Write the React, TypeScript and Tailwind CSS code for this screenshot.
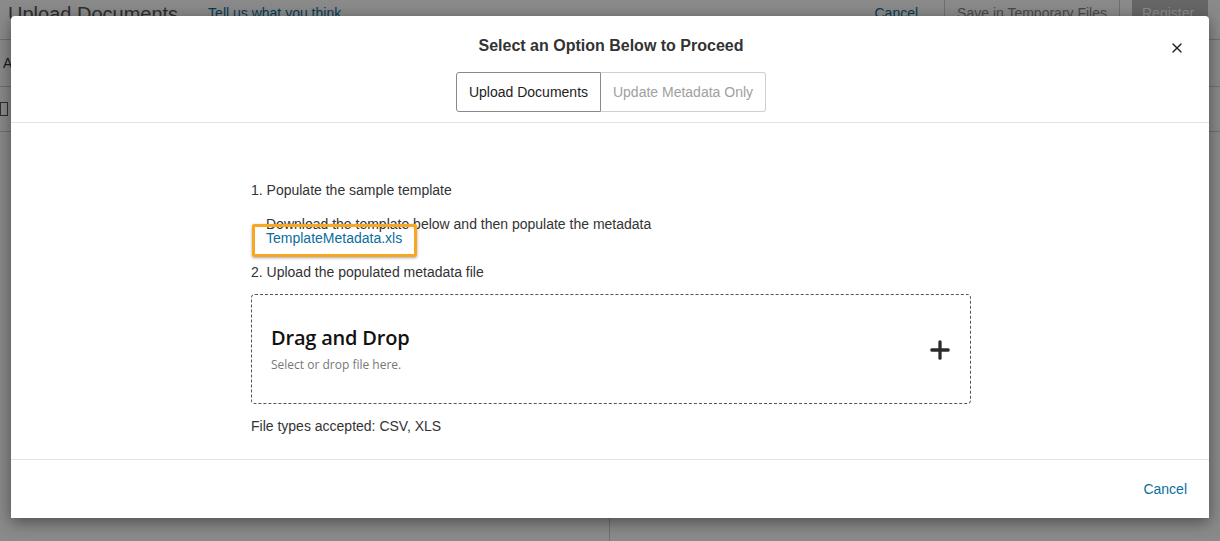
import { X, Plus } from 'lucide-react';

function BackgroundPage() {
  return (
    <div className="h-[541px] w-full overflow-hidden bg-white font-['Liberation_Sans',Arial,sans-serif] text-[#333]">
      <header className="flex h-[40px] items-center border-b border-[#d0d0d0] pl-[8px]">
        <h1 className="-mt-[12px] text-[20px] text-[#555]">Upload Documents</h1>
        <a className="-mt-[12px] ml-[30px] text-[14px] text-[#0a6e9e]">Tell us what you think</a>
        <div className="ml-auto flex h-full items-center">
          <span className="-mt-[12px] mr-[26px] text-[14px] text-[#0a6e9e]">Cancel</span>
          <span className="-mt-[12px] flex h-full items-center border-x border-[#d0d0d0] px-[12px] text-[14px] text-[#888]">
            Save in Temporary Files
          </span>
          <span className="mr-[12px] ml-[12px] flex h-full w-[76px] items-center bg-[#bdbdbd] px-[10px] text-[14px] text-white">
            <span className="-mt-[12px]">Register</span>
          </span>
        </div>
      </header>
      <div className="flex h-[47px] items-center border-b border-[#d0d0d0] pl-[3px] text-[14px]">A</div>
      <div className="flex h-[45px] items-center border-b border-[#d0d0d0] pl-[0px]">
        <span className="h-[14px] w-[8px] border border-[#555]" />
      </div>
      <div className="flex h-full">
        <div className="w-[610px] border-r border-[#d0d0d0]" />
      </div>
    </div>
  );
}

function Modal() {
  return (
    <div className="flex h-[502px] w-[1198px] flex-col rounded-t-[4px] bg-white font-['Liberation_Sans',Arial,sans-serif] text-[14px] text-[#333] shadow-[0_4px_16px_rgba(0,0,0,0.45)]">
      <div className="relative flex flex-col items-center border-b border-[#e3e3e3] pt-[20px] pb-[10px]">
        <h2 className="ml-[2px] text-[16px] leading-[20px] font-bold text-[#333]">Select an Option Below to Proceed</h2>
        <button className="absolute top-[24px] right-[24px] text-[#222]" type="button">
          <X size={16} strokeWidth={2} />
        </button>
        <div className="mt-[16px] ml-[2px] flex h-[40px]">
          <button
            className="w-[145px] rounded-l-[3px] border border-[#8a8a8a] text-[14px] text-[#222]"
            type="button"
          >
            Upload Documents
          </button>
          <button
            className="w-[165px] rounded-r-[3px] border border-l-0 border-[#cfcfcf] text-[14px] text-[#a0a0a0]"
            type="button"
          >
            Update Metadata Only
          </button>
        </div>
      </div>

      <div className="h-[336px]">
        <div className="ml-[240px] w-[720px] pt-[57px]">
          <p className="leading-[20px]">1. Populate the sample template</p>
          <p className="mt-[17px] pl-[15px] leading-[14px]">Download the template below and then populate the metadata</p>
          <div className="relative pl-[15px] leading-[14px]">
            <a className="text-[#0a6e9e]">TemplateMetadata.xls</a>
            <span className="absolute top-[-7px] left-[1px] h-[33px] w-[165px] rounded-[2px] border-[3px] border-[#f7a823] shadow-[0_1px_3px_rgba(0,0,0,0.35)]" />
          </div>
          <p className="mt-[17px] leading-[20px]">2. Upload the populated metadata file</p>

          <div className="mt-[12px] flex h-[110px] items-center rounded-[4px] border border-dashed border-[#555] pr-[16px] pl-[19px] font-['Open_Sans',sans-serif]">
            <div className="flex flex-col">
              <span className="text-[20px] leading-[26px] font-semibold tracking-[-0.2px] text-[#111]">Drag and Drop</span>
              <span className="mt-[6px] text-[12px] leading-[16px] text-[#777]">Select or drop file here.</span>
            </div>
            <Plus className="mt-[2px] ml-auto text-[#2b2b2b]" size={28} strokeWidth={2.8} />
          </div>

          <p className="mt-[12px] leading-[20px]">File types accepted: CSV, XLS</p>
        </div>
      </div>

      <div className="flex flex-1 items-center justify-end border-t border-[#e3e3e3] pr-[22px]">
        <a className="mt-[1px] text-[14px] text-[#0a6e9e]">Cancel</a>
      </div>
    </div>
  );
}

export default function App() {
  return (
    <div className="relative h-[541px] w-[1220px] overflow-hidden">
      <BackgroundPage />
      <div className="absolute inset-0 bg-black/[0.46] pt-[16px] pl-[11px]">
        <Modal />
      </div>
    </div>
  );
}
